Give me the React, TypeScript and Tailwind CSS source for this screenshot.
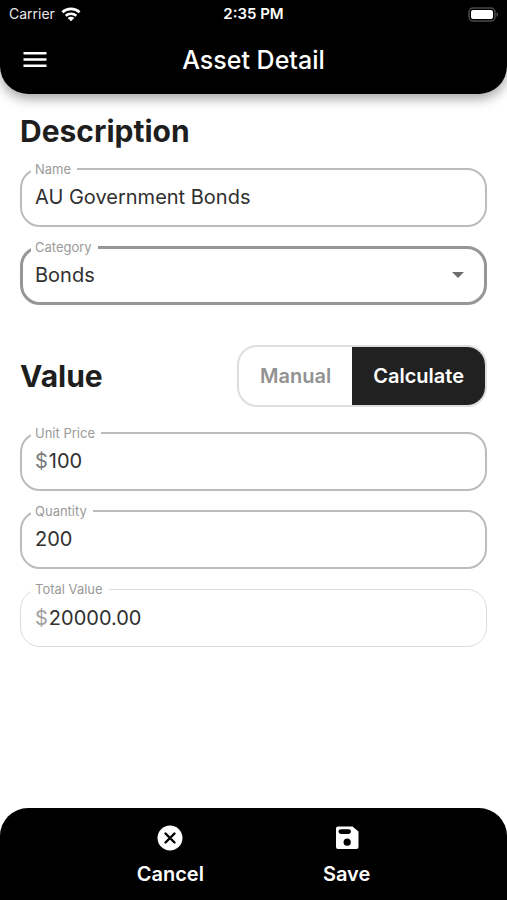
import { useState } from 'react';
import type { ReactNode } from 'react';
import clsx from 'clsx';

type FieldProps = {
  id: string;
  label: string;
  tone?: 'normal' | 'focused' | 'disabled';
  children: ReactNode;
};

function Field({ id, label, tone = 'normal', children }: FieldProps) {
  return (
    <fieldset
      className={clsx(
        'min-w-0 rounded-[20px]',
        tone === 'normal' && 'border-2 border-[#bcbcbc]',
        tone === 'focused' && 'border-[3px] border-[#969696]',
        tone === 'disabled' && 'border border-[#dcdcdc]',
      )}
    >
      <legend
        className={clsx(
          'h-4 px-1 text-[13px] leading-4 text-[#9a9a9a]',
          tone === 'normal' && 'ml-[9px]',
          tone === 'focused' && 'ml-2',
          tone === 'disabled' && 'ml-[10px]',
        )}
      >
        <label htmlFor={id} className="pr-0.5">
          {label}
        </label>
      </legend>
      <div
        className={clsx(
          'flex items-center pb-2 text-xl text-[#303030]',
          tone === 'normal' && 'h-12 px-[13px]',
          tone === 'focused' && 'h-[47px] px-3',
          tone === 'disabled' && 'h-[49px] px-[14px]',
        )}
      >
        {children}
      </div>
    </fieldset>
  );
}

const inputClass = 'h-8 w-full min-w-0 bg-transparent p-0 leading-8 outline-none';

function StatusBar() {
  return (
    <div className="grid h-7 grid-cols-3 items-center px-[9px] text-sm leading-5">
      <div className="flex items-center gap-[6px]">
        <span className="text-[#e8e8e8]">Carrier</span>
        <svg width="20" height="15" viewBox="0 0 20 15" aria-label="Wi-Fi" role="img">
          <g fill="none" stroke="#fff" strokeWidth="2.6">
            <path d="M1.4 5.2C6.2.7 13.8.7 18.6 5.2" />
            <path d="M4.7 8.8c3-2.8 7.6-2.8 10.6 0" />
          </g>
          <path d="M6.7 10.9c1.9-1.7 4.7-1.7 6.6 0L10 14.3z" fill="#fff" />
        </svg>
      </div>
      <span className="text-center text-[15px] font-semibold">2:35 PM</span>
      <svg
        className="justify-self-end"
        width="30"
        height="15"
        viewBox="0 0 30 15"
        aria-label="Battery full"
        role="img"
      >
        <rect x="1" y="1" width="26" height="13" rx="4" fill="none" stroke="#4a4a4a" strokeWidth="1.5" />
        <rect x="3" y="3" width="22" height="9" rx="2" fill="#fff" />
        <path d="M28.5 5.2c2 .8 2 3.8 0 4.6z" fill="#555" />
      </svg>
    </div>
  );
}

export default function App() {
  const [mode, setMode] = useState<'manual' | 'calculate'>('calculate');
  const [name, setName] = useState('AU Government Bonds');
  const [price, setPrice] = useState('100');
  const [quantity, setQuantity] = useState('200');
  const total = (Number(price) * Number(quantity)).toFixed(2);

  return (
    <div className="flex min-h-screen flex-col bg-white font-['Inter',sans-serif] text-[#1e1e1e]">
      <header className="rounded-b-[28px] bg-black text-white shadow-[0_5px_12px_rgba(0,0,0,0.35)]">
        <StatusBar />
        <div className="grid h-[66px] grid-cols-[48px_1fr_48px] items-center px-[11px] pb-0.5">
          <button type="button" aria-label="Open menu" className="flex h-12 items-center justify-center">
            <svg width="24" height="18" viewBox="0 0 24 18" fill="#fff">
              <path d="M.5 1h23v2.5H.5zM.5 7.2h23v2.5H.5zM.5 13.4h23v2.5H.5z" />
            </svg>
          </button>
          <h1 className="text-center text-[25px] leading-8 font-medium">Asset Detail</h1>
        </div>
      </header>

      <main className="px-5 pt-[17px] pb-8">
        <h2 className="text-3xl leading-10 font-bold">Description</h2>
        <div className="mt-[10px] flex flex-col gap-3">
          <Field id="name" label="Name">
            <input id="name" className={inputClass} value={name} onChange={(e) => setName(e.target.value)} />
          </Field>
          <Field id="category" label="Category" tone="focused">
            <div className="grid w-full items-center">
              <select
                id="category"
                defaultValue="Bonds"
                className="col-start-1 row-start-1 h-8 w-full appearance-none bg-transparent p-0 outline-none"
              >
                <option>Bonds</option>
                <option>Cash</option>
                <option>Property</option>
                <option>Shares</option>
              </select>
              <svg
                className="pointer-events-none col-start-1 row-start-1 mr-2 justify-self-end"
                width="12"
                height="6"
                viewBox="0 0 12 6"
              >
                <path d="M0 0h12L6 6z" fill="#6e6e6e" />
              </svg>
            </div>
          </Field>
        </div>

        <div className="mt-10 flex items-center justify-between">
          <h2 className="text-3xl leading-10 font-bold">Value</h2>
          <div className="flex h-[62px] overflow-hidden rounded-[20px] border-2 border-[#dedede] text-xl font-semibold">
            <button
              type="button"
              aria-pressed={mode === 'manual'}
              onClick={() => setMode('manual')}
              className={clsx('px-[21px]', mode === 'manual' ? 'bg-[#212121] text-white' : 'text-[#929292]')}
            >
              Manual
            </button>
            <button
              type="button"
              aria-pressed={mode === 'calculate'}
              onClick={() => setMode('calculate')}
              className={clsx('px-[21px]', mode === 'calculate' ? 'bg-[#212121] text-white' : 'text-[#929292]')}
            >
              Calculate
            </button>
          </div>
        </div>

        <div className="mt-[18px] flex flex-col gap-3">
          <Field id="price" label="Unit Price">
            <span className="mr-px text-[#7a7a7a]">$</span>
            <input id="price" className={inputClass} value={price} onChange={(e) => setPrice(e.target.value)} />
          </Field>
          <Field id="quantity" label="Quantity">
            <input
              id="quantity"
              className={inputClass}
              value={quantity}
              onChange={(e) => setQuantity(e.target.value)}
            />
          </Field>
          <Field id="total" label="Total Value" tone="disabled">
            <span className="mr-px text-[#a0a0a0]">$</span>
            <input id="total" className={inputClass} value={total} disabled readOnly />
          </Field>
        </div>
      </main>

      <footer className="mt-auto flex h-[92px] justify-center gap-[119px] rounded-t-[28px] bg-black pt-[17px] text-xl leading-7 font-semibold text-white">
        <button type="button" className="flex flex-col items-center gap-[9px]">
          <svg width="26" height="26" viewBox="0 0 26 26">
            <circle cx="13" cy="13" r="12.5" fill="#fff" />
            <path d="M8.5 8.5l9 9M17.5 8.5l-9 9" stroke="#000" strokeWidth="2.4" strokeLinecap="round" />
          </svg>
          Cancel
        </button>
        <button type="button" className="flex flex-col items-center gap-[9px]">
          <svg width="26" height="26" viewBox="0 0 26 26">
            <path d="M4 1.5h14.5l6 5V22a2 2 0 0 1-2 2H4a2 2 0 0 1-2-2V3.500a2 2 0 0 1 2-2z" fill="#fff" />
            <rect x="4.5" y="4.2" width="12.5" height="4.8" rx="2.4" fill="#000" />
            <circle cx="13.2" cy="17.2" r="3.6" fill="#000" />
          </svg>
          Save
        </button>
      </footer>
    </div>
  );
}
